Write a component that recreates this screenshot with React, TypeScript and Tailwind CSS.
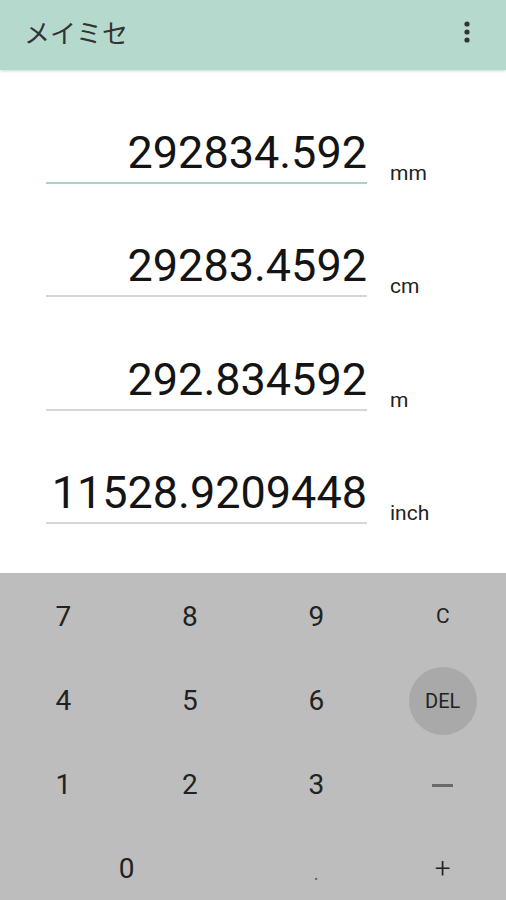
import React from "react";

const rows = [
  { value: "292834.592", unit: "mm", active: true },
  { value: "29283.4592", unit: "cm", active: false },
  { value: "292.834592", unit: "m", active: false },
  { value: "11528.9209448", unit: "inch", active: false },
];

function MoreIcon() {
  return (
    <svg width="10" height="26" viewBox="0 0 10 26" className="text-[#333]">
      <circle cx="5" cy="5" r="2.6" fill="currentColor" />
      <circle cx="5" cy="13" r="2.6" fill="currentColor" />
      <circle cx="5" cy="21" r="2.6" fill="currentColor" />
    </svg>
  );
}

function Key({ label, className = "" }: { label: React.ReactNode; className?: string }) {
  return (
    <div className={`flex h-[84px] items-center justify-center ${className}`}>
      {label}
    </div>
  );
}

export default function App() {
  return (
    <div className="flex h-[900px] w-[506px] flex-col overflow-hidden bg-white font-['Roboto',sans-serif] text-[#1c1c1c]">
      {/* toolbar */}
      <div className="relative z-10 flex h-[70px] shrink-0 items-center justify-between bg-[#b5dacd] pl-[24px] pr-[34px] shadow-[0_1px_3px_rgba(0,0,0,0.18)]">
        <span className="pb-[6px] font-['Noto_Sans_CJK_JP',sans-serif] text-[26px] leading-none text-[#333]">
          メイミセ
        </span>
        <div className="pb-[6px]">
          <MoreIcon />
        </div>
      </div>

      {/* fields */}
      <div className="flex h-[503px] shrink-0 flex-col gap-[56.3px] pt-[57px]">
        {rows.map((r) => (
          <div key={r.unit} className="flex items-end">
            <div
              className={`ml-[46px] w-[321px] pb-[3px] text-right text-[45px] leading-[52px] text-[#141414] ${
                r.active ? "border-b-2 border-[#a9d3c6]" : "border-b-2 border-[#d6d6d6]"
              }`}
            >
              {r.value}
            </div>
            <span className="ml-[23px] text-[21px] leading-[22px] text-[#222]">{r.unit}</span>
          </div>
        ))}
      </div>

      {/* keypad */}
      <div className="grid flex-1 grid-cols-4 content-start bg-[#bdbdbd] pt-[2px] text-[28px] text-[#222]">
        <Key label="7" />
        <Key label="8" />
        <Key label="9" />
        <Key label={<span className="text-[21px]">C</span>} />
        <Key label="4" />
        <Key label="5" />
        <Key label="6" />
        <Key
          label={
            <span className="flex h-[68px] w-[68px] items-center justify-center rounded-full bg-[#a9a9a9] text-[20px]">
              DEL
            </span>
          }
        />
        <Key label="1" />
        <Key label="2" />
        <Key label="3" />
        <Key label={<span className="block h-[3px] w-[21px] bg-[#6a6a6a]" />} />
        <Key label="0" className="col-span-2" />
        <Key label={<span className="pt-[8px] text-[20px] text-[#666]">.</span>} />
        <Key label={<span className="font-light">+</span>} />
      </div>
    </div>
  );
}
